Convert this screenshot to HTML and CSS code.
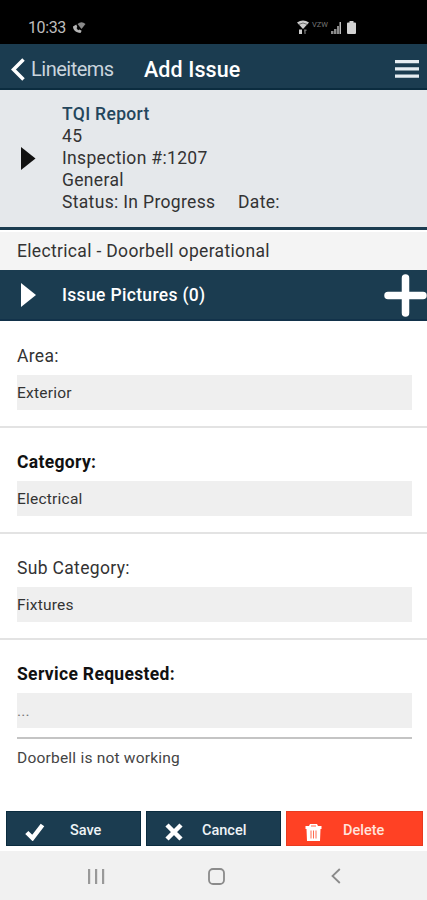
FILE: index.html
```html
<!DOCTYPE html>
<html lang="en">
<head>
<meta charset="utf-8">
<title>Add Issue</title>
<link rel="stylesheet" href="styles.css">
</head>
<body>
<div class="status">
  <span class="time">10:33</span>
  <svg class="call" width="13" height="12" viewBox="0 0 13 12"><path d="M0 4.500c0 3.500 3 6 7.500 6.500l1.200-2.200-2.400-1.300-1.200.8L3.500 6l.8-1-1-2.500z" fill="#b5b5b5"/><path d="M4.500 2q4-3.500 8 0L8.500 7z" fill="#8a8a8a"/></svg>
  <svg class="wifi" width="12" height="15" viewBox="0 0 12 15" fill="#ccc"><path d="M0 2.500Q6-1.500 12 2.500L6 9z"/><path d="M1.500 4.500q4.500-3 9 0" stroke="#444" stroke-width=".7" fill="none"/><path d="M2 9.500h3V14H2z"/><path d="M7 9.500h2.500V11H8.600v3H7.500z" fill="#777"/></svg>
  <span class="carrier">VZW</span>
  <svg class="signal" width="11" height="12" viewBox="0 0 11 12" fill="#8c8c8c"><path d="M0 9h2.500v3H0zM3 7h2.500v5H3zM6 4h2v8H6z"/><path d="M8.500 0H10v12H8.500z" fill="#bbb"/></svg>
  <svg class="battery" width="9" height="13" viewBox="0 0 9 13" fill="#d2d2d2"><path d="M2.500 0h4v1.500H8q1 0 1 1V12q0 1-1 1H1q-1 0-1-1V2.500q0-1 1-1h1.500z"/></svg>
</div>
<header class="bar">
  <svg width="14" height="23" viewBox="0 0 14 23" fill="none" stroke="#fff" stroke-width="3.500"><path d="M12.500 1.500L2.500 11.500l10 10"/></svg>
  <span class="back">Lineitems</span>
  <h1>Add Issue</h1>
  <svg class="menu" width="24" height="18" viewBox="0 0 24 18" fill="#e6edf2"><path d="M0 0h24v3.200H0zM0 7.300h24v3.200H0zM0 14.500h24v3.200H0z"/></svg>
</header>
<section class="summary">
  <svg class="tri" width="15" height="23" viewBox="0 0 15 23" fill="#111"><path d="M0 0l14.500 11.500L0 23z"/></svg>
  <div class="info">
    <div class="report">TQI Report</div>
    <div>45</div>
    <div>Inspection #:1207</div>
    <div>General</div>
    <div class="row"><span class="state">Status: In Progress</span><span class="date">Date:</span></div>
  </div>
</section>
<div class="item">Electrical - Doorbell operational</div>
<section class="pictures">
  <svg class="tri" width="15" height="24" viewBox="0 0 15 24" fill="#fff"><path d="M0 0l15 12L0 24z"/></svg>
  <h2>Issue Pictures (0)</h2>
  <svg class="plus" width="43" height="43" viewBox="0 0 43 43" stroke="#fff" stroke-width="7.500" stroke-linecap="round"><path d="M21.500 4v35M4 21.500h35"/></svg>
</section>
<main>
  <div class="field"><label>Area:</label><div class="input">Exterior</div></div>
  <div class="field"><label class="strong">Category:</label><div class="input">Electrical</div></div>
  <div class="field"><label>Sub Category:</label><div class="input">Fixtures</div></div>
  <div class="field last"><label class="strong">Service Requested:</label><div class="input dots">...</div><div class="note">Doorbell is not working</div></div>
</main>
<footer>
  <div class="btn"><svg width="20" height="18" viewBox="0 0 20 18" fill="none" stroke="#fff" stroke-width="4.500"><path d="M1.800 9.500l5.700 5.500L17.500 2"/></svg><span>Save</span></div>
  <div class="btn cancel"><svg width="18" height="18" viewBox="0 0 18 18" stroke="#fff" stroke-width="4.500"><path d="M2 2l14 14M16 2L2 16"/></svg><span>Cancel</span></div>
  <div class="btn delete"><svg width="17" height="17" viewBox="0 0 17 17"><path fill="#fff" d="M5 0h7l1 2h3.500v3h-1L15 17H2L1.500 5h-1V2H4z"/><path stroke="#ff6a50" stroke-width="1" fill="none" d="M6 2h5M6 6.500v8M8.500 6.500v8M11 6.500v8"/></svg><span>Delete</span></div>
</footer>
<nav>
  <svg width="17" height="15" viewBox="0 0 17 15" fill="#999"><path d="M0 0h2.200v15H0zM7 0h2.200v15H7zM14 0h2.200v15H14z"/></svg>
  <svg width="17" height="17" viewBox="0 0 17 17" fill="none" stroke="#8b8b8b" stroke-width="1.800"><rect x="1" y="1" width="15" height="15" rx="4"/></svg>
  <svg class="prev" width="10" height="16" viewBox="0 0 10 16" fill="none" stroke="#8b8b8b" stroke-width="1.800"><path d="M8.800 1L1.500 8l7.300 7"/></svg>
</nav>
</body>
</html>
```
FILE: styles.css
```css
* { box-sizing: border-box; }
body { margin: 0; width: 427px; height: 900px; overflow: hidden; background: #fff; font-family: Roboto, sans-serif; font-size: 17.5px; letter-spacing: .33px; color: #333; white-space: nowrap; }
svg { display: block; flex: none; }
h1, h2 { margin: 0; }
.status { height: 44px; background: #000; display: flex; align-items: center; padding: 11px 0 0 28px; }
.time { color: #bebebe; font-size: 16px; letter-spacing: -.4px; width: 45px; line-height: 20px; padding-top: 1px; }
.wifi { margin-left: 211px; }
.carrier { color: #777; font-size: 7.5px; letter-spacing: 0; width: 17px; margin: -6px 2px 0 3px; }
.battery { margin-left: 5px; }
.bar { height: 46px; background: #1b3c50; border-bottom: 2px solid #0b2c3f; display: flex; align-items: center; padding: 6px 8px 0 11px; }
.back { color: #cad5dd; font-size: 20px; letter-spacing: -.5px; width: 113px; margin-left: 6px; }
.bar h1 { color: #fff; font-size: 21.5px; letter-spacing: .1px; font-weight: 500; flex: 1; }
.summary { height: 140px; background: #e5e8eb; border-bottom: 3px solid #1b3c50; display: flex; align-items: center; padding-left: 21px; }
.tri { margin-right: 26px; }
.info { line-height: 21.9px; padding-top: 1px; }
.report { color: #24465d; font-weight: 500; }
.row { display: flex; }
.state { width: 176px; }
.item { height: 40px; border-top: 2px solid #fff; background: #f4f4f4; padding-left: 17px; line-height: 38px; }
.pictures { height: 51px; background: #1b3c50; display: flex; align-items: center; padding: 1px 0 0 21px; border-bottom: 2px solid #12324a; }
.pictures h2 { color: #fff; font-size: 17.5px; font-weight: 500; flex: 1; }
main { height: 467px; margin-top: -1px; overflow: hidden; }
.field { height: 106px; background: linear-gradient(#e3e3e3, #e3e3e3) 0 0 / 100% 2px no-repeat; padding: 25px 15px 0 17px; }
.field:first-child { background: none; }
.field label { display: block; height: 30px; line-height: 22px; }
.field .strong { color: #111; font-weight: 700; }
.input { height: 35px; background: #efefef; font-size: 15.5px; letter-spacing: .22px; line-height: 36px; }
.dots { color: #777; }
.last { height: 167px; }
.note { border-top: 2px solid #c4c4c4; margin-top: 9px; font-size: 15.5px; letter-spacing: .22px; line-height: 39px; color: #444; }
footer { height: 64px; padding: 24px 4px 5px 6px; display: flex; gap: 5px; }
.btn { width: 135px; height: 35px; background: #1b3c50; border: 1px solid #0b2c3f; color: #eef3f6; font-size: 14.5px; letter-spacing: 0; font-weight: 500; display: flex; align-items: center; padding-left: 18px; }
.btn svg { margin-top: 7px; }
.btn span { margin: 3px 0 0 25px; }
.cancel span { margin-left: 19px; }
.delete { width: 137px; background: #ff4124; border-color: #e83b20; color: #ffe3dc; }
.delete span { margin-left: 21px; }
nav { height: 49px; background: #f1f1f1; display: flex; align-items: center; gap: 103px; padding: 1px 0 0 88px; }
.prev { margin-left: 3px; }
```
